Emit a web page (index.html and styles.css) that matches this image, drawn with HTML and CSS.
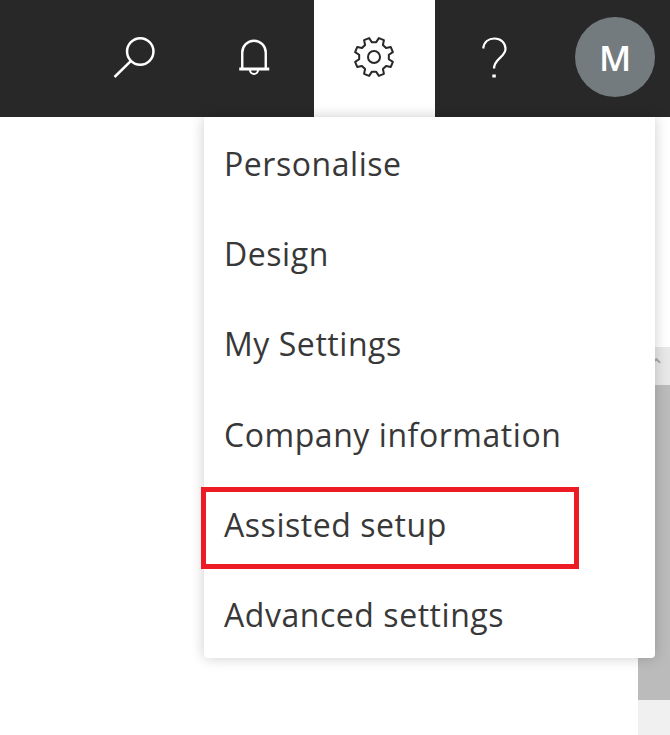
FILE: index.html
```html
<!DOCTYPE html>
<html lang="en">
<head>
<meta charset="utf-8">
<title>Settings menu</title>
<link rel="stylesheet" href="styles.css">
</head>
<body>
<header class="topbar">
  <button class="tool">
    <svg class="icon" width="44" height="44" viewBox="0 0 44 44"><circle cx="29.250" cy="16.500" r="13.200" fill="none" stroke="currentColor" stroke-width="2.500"/><path d="M20 25.800 3.500 42" fill="none" stroke="currentColor" stroke-width="2.500"/></svg>
  </button>
  <button class="tool">
    <svg class="icon" width="34" height="40" viewBox="0 0 34 40"><path d="M5.250 31V15.500a11.750 11.750 0 0 1 23.500 0V31" fill="none" stroke="currentColor" stroke-width="2.400"/><path d="M2.250 32h30" fill="none" stroke="currentColor" stroke-width="3"/><path d="M13 33a4 4 0 0 0 8 0" fill="none" stroke="currentColor" stroke-width="2"/></svg>
  </button>
  <button class="tool tool-active">
    <svg class="icon" width="42" height="42" viewBox="0 0 42 42"><path d="M23.220 6.170 25.880 2.120 30.900 4.200 29.920 8.940 33.060 12.080 37.800 11.100 39.880 16.120 35.830 18.780V23.220L39.880 25.880 37.800 30.900 33.060 29.920 29.920 33.060 30.900 37.800 25.880 39.880 23.220 35.830H18.780L16.120 39.880 11.100 37.800 12.080 33.060 8.940 29.920 4.200 30.900 2.120 25.880 6.170 23.220V18.780L2.120 16.120 4.200 11.100 8.940 12.080 12.080 8.940 11.100 4.200 16.120 2.120 18.780 6.170Z" fill="none" stroke="currentColor" stroke-width="2" stroke-linejoin="round"/><circle cx="21" cy="21" r="6" fill="none" stroke="currentColor" stroke-width="2"/></svg>
  </button>
  <button class="tool">
    <svg class="icon" width="28" height="42" viewBox="0 0 28 42"><path d="M2.200 12.500C3 6 7.500 2.500 13.500 2.500 20 2.500 24.500 7 24.500 13c0 8-11.500 9.500-11.500 19.500" fill="none" stroke="currentColor" stroke-width="2.200"/><rect x="11.300" y="38.500" width="3.500" height="3" fill="currentColor"/></svg>
  </button>
  <div class="avatar">M</div>
</header>
<div class="content">
  <div class="scrollbar">
    <div class="scroll-up"><span class="scroll-caret">⌃</span></div>
    <div class="scroll-thumb"></div>
    <div class="scroll-rest"></div>
  </div>
  <nav class="menu">
    <a class="menu-item">Personalise</a>
    <a class="menu-item">Design</a>
    <a class="menu-item">My Settings</a>
    <a class="menu-item">Company information</a>
    <a class="menu-item menu-item-marked">Assisted setup<span class="highlight"></span></a>
    <a class="menu-item">Advanced settings</a>
  </nav>
</div>
</body>
</html>
```

FILE: styles.css
```css
* {
  box-sizing: border-box;
}

html,
body {
  margin: 0;
  height: 735px;
  overflow: hidden;
  background: #fff;
  font-family: "Open Sans", "Noto Sans", sans-serif;
}

.topbar {
  height: 117px;
  background: #282828;
  display: flex;
  justify-content: flex-end;
  align-items: center;
  padding-right: 15px;
}

.tool {
  width: 120.500px;
  height: 117px;
  border: 0;
  padding: 0 0 4px;
  background: transparent;
  color: #fff;
  display: flex;
  align-items: center;
  justify-content: center;
}

.tool-active {
  background: #fff;
  color: #282828;
}

.icon {
  display: block;
}

.avatar {
  width: 80px;
  height: 80px;
  margin: 0 0 3px 20px;
  border-radius: 50%;
  background: #737b7f;
  color: #fff;
  font-size: 35px;
  font-weight: 600;
  display: flex;
  align-items: center;
  justify-content: center;
}

.content {
  position: relative;
  height: 618px;
  display: flex;
  justify-content: flex-end;
}

.scrollbar {
  width: 32px;
  margin-top: 230px;
  display: flex;
  flex-direction: column;
  background: #f0f0f0;
}

.scroll-up {
  height: 38px;
  background: #e8e8e8;
  color: #a6a6a6;
  font-size: 20px;
  line-height: 38px;
  padding-left: 10px;
  overflow: hidden;
}

.scroll-caret {
  display: block;
  height: 38px;
}

.scroll-thumb {
  height: 315px;
  background: #bbb;
}

.scroll-rest {
  flex: 1;
}

.menu {
  position: absolute;
  left: 204px;
  top: 0;
  width: 451px;
  height: 541px;
  background: #fff;
  border-radius: 0 0 4px 4px;
  box-shadow: 0 0 14px rgba(0, 0, 0, .2);
  display: flex;
  flex-direction: column;
}

.menu-item {
  position: relative;
  flex: 1;
  display: flex;
  align-items: center;
  padding: 3px 0 0 20px;
  font-size: 32px;
  letter-spacing: .55px;
  color: #383838;
}

.highlight {
  position: absolute;
  left: -3px;
  top: 9px;
  width: 378px;
  height: 82px;
  border: 5px solid #ed1c24;
}
```
